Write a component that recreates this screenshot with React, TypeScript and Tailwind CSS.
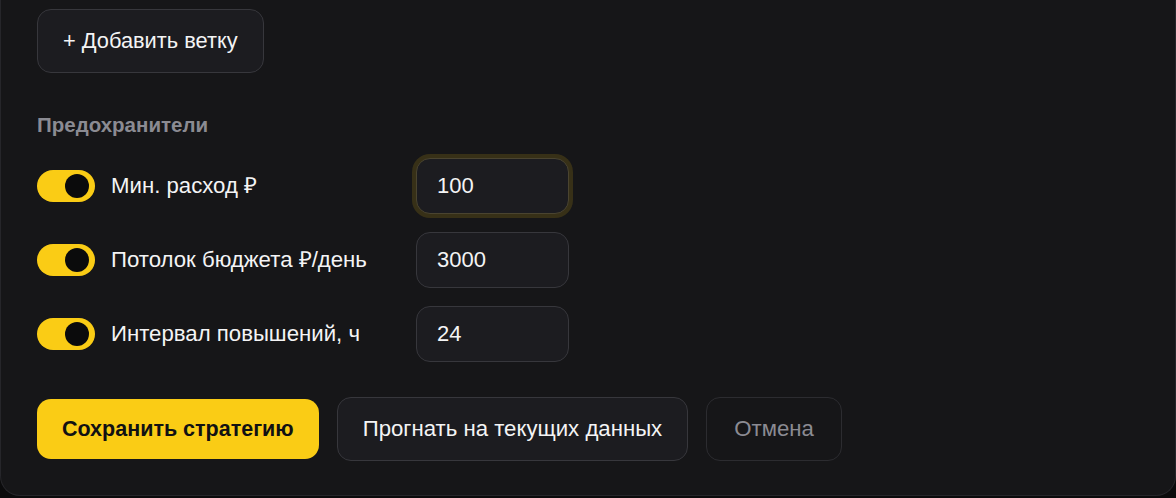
import { useState } from "react";

type Guard = {
  id: string;
  label: string;
  value: string;
  enabled: boolean;
};

const initialGuards: Guard[] = [
  { id: "min", label: "Мин. расход ₽", value: "100", enabled: true },
  { id: "cap", label: "Потолок бюджета ₽/день", value: "3000", enabled: true },
  { id: "interval", label: "Интервал повышений, ч", value: "24", enabled: true },
];

function Toggle({ on, onChange }: { on: boolean; onChange: () => void }) {
  return (
    <button
      type="button"
      onClick={onChange}
      className={`flex h-8 w-[58px] shrink-0 items-center rounded-full px-[6px] ${
        on ? "justify-end bg-[#facc15]" : "justify-start bg-[#3a3a3f]"
      }`}
    >
      <span className="h-6 w-6 rounded-full bg-[#0b0b0c]" />
    </button>
  );
}

export default function App() {
  const [guards, setGuards] = useState(initialGuards);

  const toggle = (id: string) =>
    setGuards((g) => g.map((x) => (x.id === id ? { ...x, enabled: !x.enabled } : x)));

  return (
    <div className="min-h-[498px] bg-[#0b0b0c] font-['Liberation_Sans',Arial,sans-serif]">
      <div className="rounded-b-[20px] border border-t-0 border-[#26262a] bg-[#161618] px-9 pb-[34px] pt-[9px]">
        <button className="h-16 rounded-[14px] border border-[#37373c] bg-[#1c1c20] px-[25px] text-[21.8px] text-[#f4f4f5]">
          + Добавить ветку
        </button>

        <h3 className="mt-10 text-[20.5px] font-bold leading-6 text-[#8b8b92]">
          Предохранители
        </h3>

        <div className="mt-[21px] flex flex-col gap-[18px]">
          {guards.map((g, i) => (
            <div key={g.id} className="flex items-center">
              <Toggle on={g.enabled} onChange={() => toggle(g.id)} />
              <span className="ml-4 w-[289px] text-[22.2px] text-[#f4f4f5]">{g.label}</span>
              <input
                defaultValue={g.value}
                className={`ml-4 h-14 w-[153px] rounded-[14px] border bg-[#1c1c20] px-5 text-[22px] text-[#f4f4f5] outline-none ${
                  i === 0
                    ? "border-[#4a4430] ring-4 ring-[#facc15]/15"
                    : "border-[#37373c]"
                }`}
              />
            </div>
          ))}
        </div>

        <div className="mt-[35px] flex items-center gap-[18px]">
          <button className="h-[60px] rounded-[14px] bg-[#facc15] px-[25px] text-[21.5px] font-bold text-[#111113]">
            Сохранить стратегию
          </button>
          <button className="h-16 rounded-[14px] border border-[#37373c] bg-[#1c1c20] px-[25px] text-[22.2px] text-[#f4f4f5]">
            Прогнать на текущих данных
          </button>
          <button className="h-16 rounded-[14px] border border-[#2c2c30] px-[27px] text-[22.2px] text-[#8b8b92]">
            Отмена
          </button>
        </div>
      </div>
    </div>
  );
}
